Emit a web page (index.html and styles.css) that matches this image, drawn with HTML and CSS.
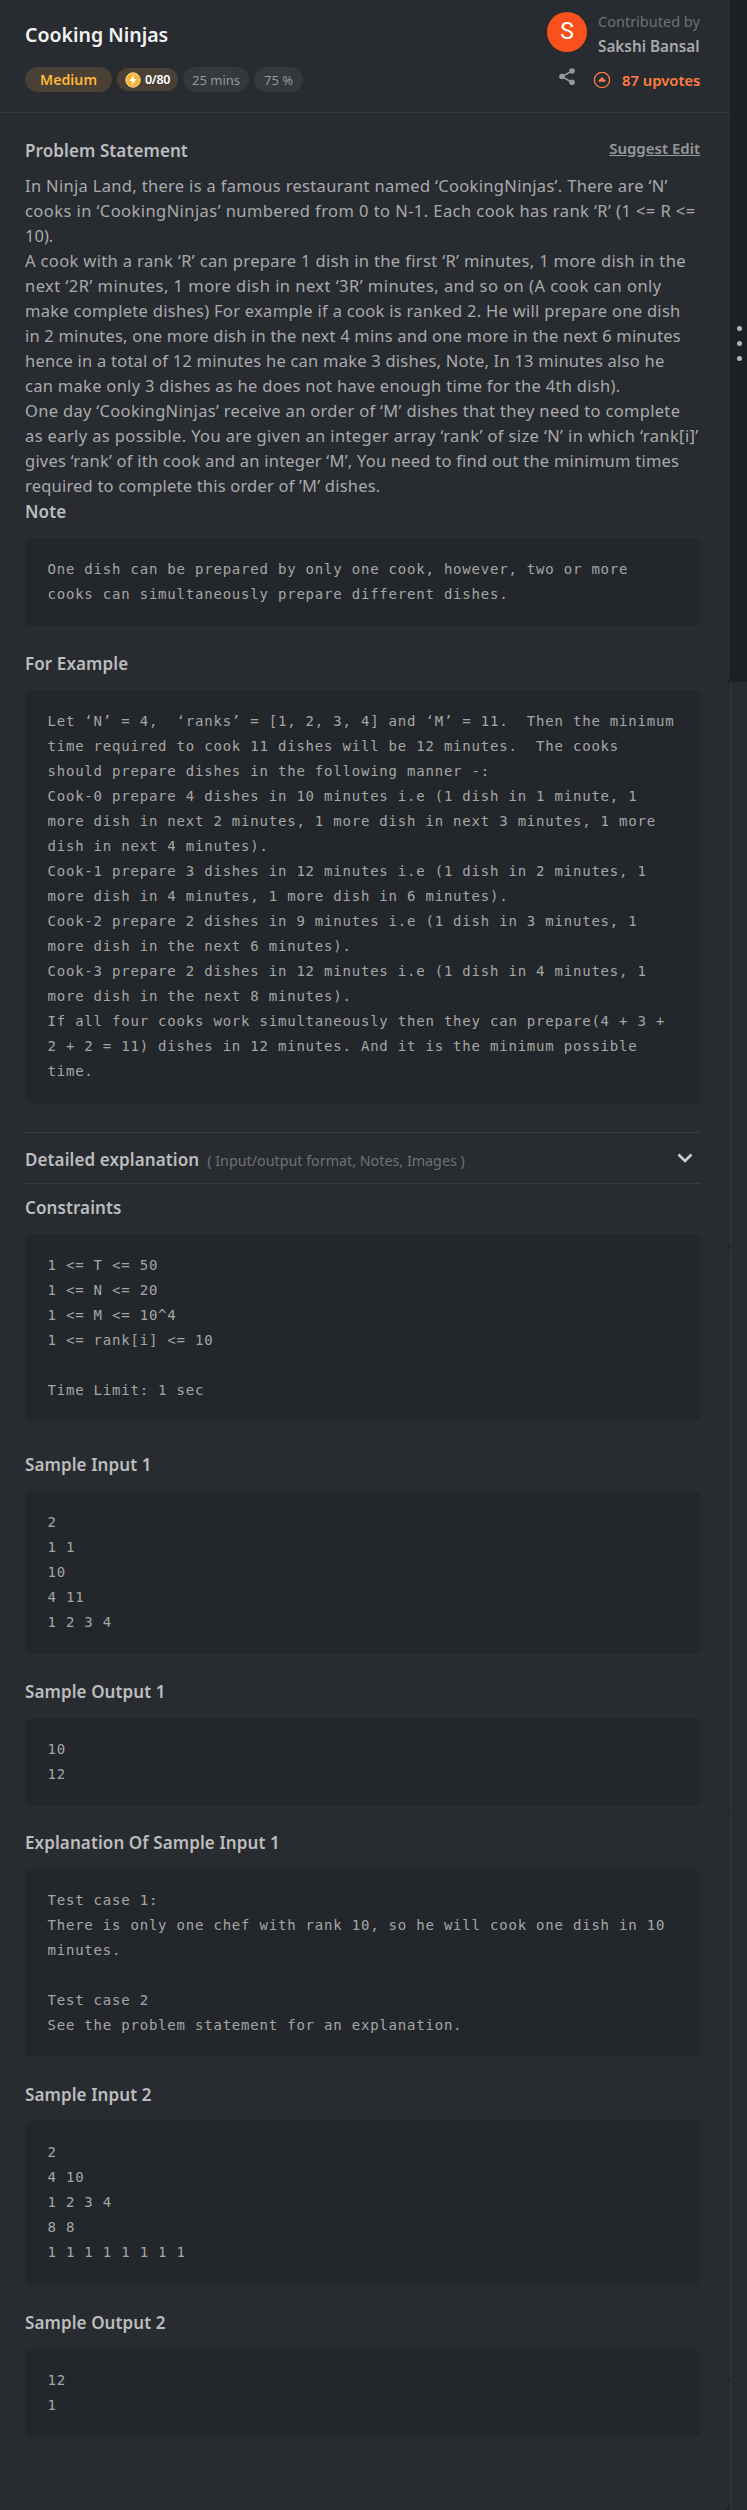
FILE: index.html
```
<!DOCTYPE html>
<html lang="en">
<head>
<meta charset="utf-8">
<title>Cooking Ninjas</title>
<link rel="stylesheet" href="styles.css">
</head>
<body>
<div class="page">
<main class="panel">
  <header class="head">
    <div class="head-left">
      <h1 class="title">Cooking Ninjas</h1>
      <div class="tags">
        <span class="tag tag-level"><span>Medium</span></span>
        <span class="tag tag-score"><svg width="16" height="16" viewBox="0 0 16 16"><circle cx="8" cy="8" r="7.2" fill="#f9b233" stroke="#ffe0a0" stroke-width="1"/><path d="M9.2 2.7 4.4 9h2.9l-.8 4.4L11.6 7H8.6z" fill="#fff"/></svg><span class="score">0/80</span></span>
        <span class="tag tag-time"><span class="time">25 mins</span></span>
        <span class="tag tag-rate"><span class="rate">75 %</span></span>
      </div>
    </div>
    <div class="head-right">
      <div class="author">
        <span class="avatar">S</span>
        <div class="by"><span class="by-label">Contributed by</span><span class="by-name">Sakshi Bansal</span></div>
      </div>
      <div class="actions">
        <svg class="share" width="16" height="18" viewBox="0 0 16 18"><path d="M13 3 3 8.5 13 14.5" fill="none" stroke="#97999b" stroke-width="1.6"/><g fill="#97999b"><circle cx="13" cy="3" r="2.8"/><circle cx="3" cy="8.5" r="2.8"/><circle cx="13" cy="14.3" r="2.8"/></g></svg>
        <svg class="up" width="18" height="18" viewBox="0 0 18 18"><circle cx="9" cy="9" r="7.6" fill="none" stroke="#ff7e3f" stroke-width="1.3"/><path d="M9 5.9 12.2 9.2V10.7H5.8V9.2z" fill="#ff7e3f"/></svg>
        <span class="votes">87 upvotes</span>
      </div>
    </div>
  </header>
  <div class="body">
    <div class="bar"><h2 class="h">Problem Statement</h2><span class="edit">Suggest Edit</span></div>
    <div class="prose">
      <div><span class="l1">In Ninja Land, there is a famous restaurant named ‘CookingNinjas’. There are ‘N’</span></div>
      <div><span class="l2">cooks in ‘CookingNinjas’ numbered from 0 to N-1. Each cook has rank ‘R’ (1 &lt;= R &lt;=</span></div>
      <div><span class="l3">10).</span></div>
      <div><span class="l4">A cook with a rank ‘R’ can prepare 1 dish in the first ‘R’ minutes, 1 more dish in the</span></div>
      <div><span class="l5">next ‘2R’ minutes, 1 more dish in next ‘3R’ minutes, and so on (A cook can only</span></div>
      <div><span class="l6">make complete dishes) For example if a cook is ranked 2. He will prepare one dish</span></div>
      <div><span class="l7">in 2 minutes, one more dish in the next 4 mins and one more in the next 6 minutes</span></div>
      <div><span class="l8">hence in a total of 12 minutes he can make 3 dishes, Note, In 13 minutes also he</span></div>
      <div><span class="l9">can make only 3 dishes as he does not have enough time for the 4th dish).</span></div>
      <div><span class="l10">One day ‘CookingNinjas’ receive an order of ‘M’ dishes that they need to complete</span></div>
      <div><span class="l11">as early as possible. You are given an integer array ‘rank’ of size ‘N’ in which ‘rank[i]’</span></div>
      <div><span class="l12">gives ‘rank’ of ith cook and an integer ‘M’, You need to find out the minimum times</span></div>
      <div><span class="l13">required to complete this order of ’M’ dishes.</span></div>
    </div>
    <h2 class="h note">Note</h2>
    <pre class="code">One dish can be prepared by only one cook, however, two or more
cooks can simultaneously prepare different dishes.</pre>
    <h2 class="h">For Example</h2>
    <pre class="code">Let ‘N’ = 4,  ‘ranks’ = [1, 2, 3, 4] and ‘M’ = 11.  Then the minimum
time required to cook 11 dishes will be 12 minutes.  The cooks
should prepare dishes in the following manner -:
Cook-0 prepare 4 dishes in 10 minutes i.e (1 dish in 1 minute, 1
more dish in next 2 minutes, 1 more dish in next 3 minutes, 1 more
dish in next 4 minutes).
Cook-1 prepare 3 dishes in 12 minutes i.e (1 dish in 2 minutes, 1
more dish in 4 minutes, 1 more dish in 6 minutes).
Cook-2 prepare 2 dishes in 9 minutes i.e (1 dish in 3 minutes, 1
more dish in the next 6 minutes).
Cook-3 prepare 2 dishes in 12 minutes i.e (1 dish in 4 minutes, 1
more dish in the next 8 minutes).
If all four cooks work simultaneously then they can prepare(4 + 3 +
2 + 2 = 11) dishes in 12 minutes. And it is the minimum possible
time.</pre>
    <div class="detail">
      <h2 class="h">Detailed explanation</h2><span class="hint">( Input/output format, Notes, Images )</span>
      <svg class="chev" width="16" height="11" viewBox="0 0 16 11"><path d="M1.5 1.5 8 8 14.5 1.5" fill="none" stroke="#d0d1d2" stroke-width="2.6"/></svg>
    </div>
    <h2 class="h cons">Constraints</h2>
    <pre class="code">1 &lt;= T &lt;= 50
1 &lt;= N &lt;= 20
1 &lt;= M &lt;= 10^4
1 &lt;= rank[i] &lt;= 10

Time Limit: 1 sec</pre>
    <h2 class="h sample1">Sample Input 1</h2>
    <pre class="code">2
1 1
10
4 11
1 2 3 4</pre>
    <h2 class="h">Sample Output 1</h2>
    <pre class="code tight">10
12</pre>
    <h2 class="h">Explanation Of Sample Input 1</h2>
    <pre class="code">Test case 1:
There is only one chef with rank 10, so he will cook one dish in 10
minutes.

Test case 2
See the problem statement for an explanation.</pre>
    <h2 class="h">Sample Input 2</h2>
    <pre class="code loose">2
4 10
1 2 3 4
8 8
1 1 1 1 1 1 1 1</pre>
    <h2 class="h">Sample Output 2</h2>
    <pre class="code">12
1</pre>
  </div>
  <i class="notch n1"></i><i class="notch n2"></i><i class="notch n3"></i><i class="notch n4"></i><i class="notch n5"></i>
</main>
<aside class="rail"><div class="grip"><i></i><i></i><i></i></div></aside>
</div>
</body>
</html>
```
FILE: styles.css
```
* { box-sizing: border-box; }
body { margin: 0; background: #282b30; font-family: "Noto Sans", sans-serif; color: #a9aaac; }
.page { display: flex; width: 747px; height: 2510px; overflow: hidden; }
.panel { position: relative; width: 730px; height: 2510px; background: #282b30; }
.rail { width: 17px; height: 2510px; background: linear-gradient(#1e2124 682px, #282b30 682px); border-left: 1px solid #303338; border-image: linear-gradient(#1e2124 682px, #34373c 682px) 1; }
.grip { display: flex; flex-direction: column; gap: 10px; padding: 326px 0 0 6px; }
.grip i { width: 5px; height: 5px; border-radius: 50%; background: #b4b5b6; }
.notch { position: absolute; right: 0; width: 6px; height: 9px; background: radial-gradient(ellipse 6px 9px at 0 0, transparent 97%, #1e2124 100%); }
.n1 { top: 674px; }
.n2 { top: 1240px; }
.n3 { top: 1806px; }
.n4 { top: 2372px; }
.n5 { top: 2501px; }
h1, h2, pre { margin: 0; }
span { white-space: nowrap; }
.head { display: flex; justify-content: space-between; height: 113px; padding: 0 30px 0 25px; border-bottom: 1px solid #373a3e; }
.title { height: 30px; margin-top: 20px; font-size: 19.5px; line-height: 30px; font-weight: 600; color: #f2f2f3; }
.tags { display: flex; align-items: center; gap: 5px; margin-top: 17px; }
.tag { display: flex; align-items: center; justify-content: center; height: 25px; border-radius: 13px; font-size: 13px; background: #35383d; color: #97989a; }
.tag-level { width: 87px; background: #4a4035; color: #fdb73b; font-size: 14.2px; font-weight: 600; }
.tag-score { width: 61px; height: 23px; gap: 4px; background: #4a4035; color: #fff; font-size: 12.5px; font-weight: 600; }
.score { letter-spacing: -0.4px; }
.tag-time { width: 66px; }
.tag-rate { width: 49px; }
.author { display: flex; height: 60px; gap: 11px; padding-top: 12px; justify-content: flex-end; }
.avatar { width: 40px; height: 40px; border-radius: 50%; background: #f8511d; color: #fff; font: 23px/40px Roboto, sans-serif; text-align: center; }
.by { display: flex; flex-direction: column; width: 102px; margin-top: -3px; font-size: 15.3px; line-height: 25px; }
.by-label { color: #6f7275; font-size: 14.5px; }
.by-name { font-weight: 600; }
.actions { display: flex; margin-top: 8px; justify-content: flex-end; }
.share { margin-right: 18px; }
.up { margin: 3px 11px 0 0; }
.votes { width: 78px; font-size: 14.8px; line-height: 24px; font-weight: 600; color: #ff7e3f; }
.body { padding: 23px 30px 0 25px; }
.bar { display: flex; justify-content: space-between; height: 38px; }
.h { font-size: 17px; line-height: 30px; height: 30px; font-weight: 600; color: #bcbdbe; white-space: nowrap; letter-spacing: .1px; }
.edit { font-size: 15px; line-height: 24px; font-weight: 600; color: #97989a; text-decoration: underline; }
.prose { font-size: 16.5px; line-height: 25px; height: 326px; margin-top: -1px; }
.prose div { height: 25px; }
.l1 { letter-spacing: .32px; }
.l2 { letter-spacing: .43px; }
.l4 { letter-spacing: .36px; }
.l5 { letter-spacing: .46px; }
.l11 { letter-spacing: .38px; }
.l6, .l9 { letter-spacing: .29px; }
.l7, .l13 { letter-spacing: .2px; }
.l8, .l12 { letter-spacing: .23px; }
.l10 { letter-spacing: .32px; }
.code { font: 14px/25px "DejaVu Sans Mono", monospace; letter-spacing: .79px; color: #a5a6a7; background: #23262a; border-radius: 6px; padding: 19px 0 18.5px 22.5px; margin: 11px 0 23.5px; width: 675px; }
.code.tight { margin-bottom: 22.5px; }
.code.loose { margin-bottom: 24.5px; }
.note { margin-top: -2px; }
.detail { display: flex; align-items: center; height: 52px; margin-top: 29px; border: solid #373a3e; border-width: 1px 0; padding-top: 5px; }
.hint { margin-left: 8px; font-size: 14.3px; color: #6f7275; }
.chev { margin: -4px 7px 0 auto; }
.cons { margin-top: 9px; }
.sample1 { margin-top: 29px; }
```
